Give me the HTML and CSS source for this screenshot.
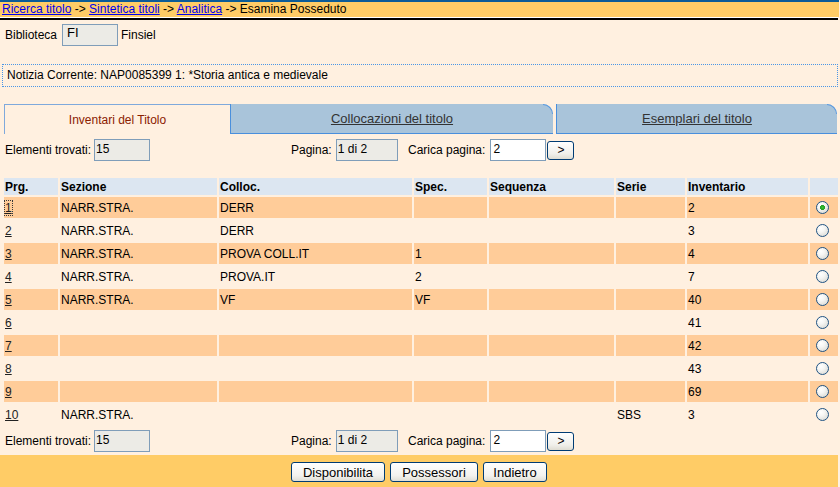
FILE: index.html
```html
<!DOCTYPE html>
<html lang="it">
<head>
<meta charset="utf-8">
<title>Esamina Posseduto</title>
<link rel="stylesheet" href="styles.css">
</head>
<body>
<div class="page">
  <div class="topstrip"></div>
  <div class="crumbs"><a href="#">Ricerca titolo</a> -&gt; <a href="#">Sintetica titoli</a> -&gt; <a href="#">Analitica</a> -&gt; Esamina Posseduto</div>
  <div class="rule"></div>

  <div class="bib">
    <span>Biblioteca</span>
    <input class="field ro bibfield" value="FI" readonly>
    <span class="bibname">Finsiel</span>
  </div>

  <div class="notizia">Notizia Corrente: NAP0085399 1: *Storia antica e medievale</div>

  <div class="tabs">
    <div class="tab tab-active">Inventari del Titolo</div>
    <div class="tab tab-off tab-two"><a href="#">Collocazioni del titolo</a></div>
    <div class="tab tab-off tab-three"><a href="#">Esemplari del titolo</a></div>
  </div>

  <div class="pager">
    <div class="pg-a"><span>Elementi trovati:</span><input class="field ro f-count" value="15" readonly></div>
    <div class="pg-b"><span>Pagina:</span><input class="field ro f-page" value="1 di 2" readonly></div>
    <div class="pg-c"><span>Carica pagina:</span><input class="field f-load" value="2"><button class="go">&gt;</button></div>
  </div>

  <table class="grid">
    <colgroup>
      <col class="c-prg"><col class="c-sez"><col class="c-col"><col class="c-spec"><col class="c-seq"><col class="c-ser"><col class="c-inv"><col class="c-rad">
    </colgroup>
    <thead>
      <tr><th>Prg.</th><th>Sezione</th><th>Colloc.</th><th>Spec.</th><th>Sequenza</th><th>Serie</th><th>Inventario</th><th></th></tr>
    </thead>
    <tbody>
      <tr class="odd"><td><a href="#" class="focus">1</a></td><td>NARR.STRA.</td><td>DERR</td><td></td><td></td><td></td><td>2</td><td><span class="radio checked"></span></td></tr>
      <tr class="even"><td><a href="#">2</a></td><td>NARR.STRA.</td><td>DERR</td><td></td><td></td><td></td><td>3</td><td><span class="radio"></span></td></tr>
      <tr class="odd"><td><a href="#">3</a></td><td>NARR.STRA.</td><td>PROVA COLL.IT</td><td>1</td><td></td><td></td><td>4</td><td><span class="radio"></span></td></tr>
      <tr class="even"><td><a href="#">4</a></td><td>NARR.STRA.</td><td>PROVA.IT</td><td>2</td><td></td><td></td><td>7</td><td><span class="radio"></span></td></tr>
      <tr class="odd"><td><a href="#">5</a></td><td>NARR.STRA.</td><td>VF</td><td>VF</td><td></td><td></td><td>40</td><td><span class="radio"></span></td></tr>
      <tr class="even"><td><a href="#">6</a></td><td></td><td></td><td></td><td></td><td></td><td>41</td><td><span class="radio"></span></td></tr>
      <tr class="odd"><td><a href="#">7</a></td><td></td><td></td><td></td><td></td><td></td><td>42</td><td><span class="radio"></span></td></tr>
      <tr class="even"><td><a href="#">8</a></td><td></td><td></td><td></td><td></td><td></td><td>43</td><td><span class="radio"></span></td></tr>
      <tr class="odd"><td><a href="#">9</a></td><td></td><td></td><td></td><td></td><td></td><td>69</td><td><span class="radio"></span></td></tr>
      <tr class="even"><td><a href="#">10</a></td><td>NARR.STRA.</td><td></td><td></td><td></td><td>SBS</td><td>3</td><td><span class="radio"></span></td></tr>
    </tbody>
  </table>

  <div class="pager pager-bottom">
    <div class="pg-a"><span>Elementi trovati:</span><input class="field ro f-count" value="15" readonly></div>
    <div class="pg-b"><span>Pagina:</span><input class="field ro f-page" value="1 di 2" readonly></div>
    <div class="pg-c"><span>Carica pagina:</span><input class="field f-load" value="2"><button class="go">&gt;</button></div>
  </div>

  <div class="footer">
    <button class="btn b-disp">Disponibilita</button>
    <button class="btn b-poss">Possessori</button>
    <button class="btn b-ind">Indietro</button>
  </div>
</div>
</body>
</html>
```

FILE: styles.css
```css
html, body {
  margin: 0;
  padding: 0;
  background: #fff0e0;
}
body {
  font-family: "Liberation Sans", Arial, sans-serif;
  font-size: 12px;
  color: #000;
}
.page {
  width: 840px;
  height: 487px;
  overflow: hidden;
}
.topstrip {
  height: 2px;
  width: 839px;
  background: #0b5b97;
}
.crumbs {
  height: 15px;
  line-height: 15px;
  width: 837px;
  padding-left: 2px;
  background: #ffcc66;
  white-space: nowrap;
}
.crumbs a {
  color: #0000ee;
  text-decoration: underline;
}
.rule {
  width: 838px;
  height: 2px;
  background: #000;
  border-top: 1px solid #fff;
}
.bib {
  display: flex;
  align-items: center;
  height: 22px;
  padding: 4px 0 0 5px;
  margin-bottom: 18px;
}
.field {
  box-sizing: border-box;
  height: 22px;
  border: 1px solid #7f9db9;
  background: #fff;
  font-family: "Liberation Sans", Arial, sans-serif;
  font-size: 12px;
  color: #000;
  padding: 0 0 3px 1px;
  margin: 0;
  outline: none;
}
.field.ro {
  background: #ecebe6;
}
.bibfield {
  width: 56px;
  margin-left: 5px;
  padding-left: 4px;
  font-size: 13px;
  padding-bottom: 5px;
}
.bibname {
  margin-left: 3px;
}
.notizia {
  margin: 0 2px;
  height: 21px;
  line-height: 21px;
  padding-left: 4px;
  border: 1px dotted #4b96e6;
}
.tabs {
  display: flex;
  height: 30px;
  margin: 17px 0 0 4px;
}
.tab {
  box-sizing: border-box;
  height: 30px;
  display: flex;
  align-items: center;
  justify-content: center;
  position: relative;
}
.tab-active {
  width: 226px;
  border-top: 1px solid #7fa9dc;
  border-left: 1px solid #7fa9dc;
  color: #8b2000;
  font-size: 12px;
}
.tab-off {
  background: #a9c4da;
  border-left: 1px solid #4a8fdc;
  border-bottom: 1px solid #4a8fdc;
  border-top-right-radius: 10px;
  font-size: 13px;
  font-weight: normal;
}
.tab-off::after {
  content: "";
  position: absolute;
  top: 0;
  right: 0;
  width: 10px;
  height: 10px;
  box-sizing: border-box;
  border-top: 1px solid #5a9ae0;
  border-right: 1px solid #5a9ae0;
  border-top-right-radius: 10px;
}
.tab-off a {
  color: #333;
  text-decoration: underline;
}
.tab-two {
  width: 323px;
}
.tab-three {
  width: 281px;
  margin-left: 3px;
}
.pager {
  display: flex;
  align-items: center;
  height: 22px;
  margin-top: 5px;
  padding-left: 5px;
}
.pager-bottom {
  margin-top: 3px;
}
.pg-a, .pg-b, .pg-c {
  display: flex;
  align-items: center;
}
.pg-a {
  width: 286px;
}
.pg-b {
  width: 117px;
}
.f-count {
  width: 56px;
  margin-left: 3px;
}
.f-page {
  width: 62px;
  margin-left: 4px;
}
.f-load {
  width: 56px;
  margin-left: 5px;
  padding-left: 2px;
}
.go {
  box-sizing: border-box;
  width: 27px;
  height: 19px;
  margin-left: 1px;
  padding: 0;
  border: 1px solid #003c74;
  border-radius: 3px;
  background: linear-gradient(#ffffff, #f0efea 70%, #dedcd2);
  font-family: "Liberation Sans", Arial, sans-serif;
  font-size: 12px;
  font-weight: normal;
  color: #000;
  line-height: 15px;
}
.grid {
  table-layout: fixed;
  width: 838px;
  margin: 15px 0 0 2px;
  border-collapse: separate;
  border-spacing: 2px;
}
.c-prg { width: 54px; }
.c-sez { width: 157px; }
.c-col { width: 193px; }
.c-spec { width: 73px; }
.c-seq { width: 125px; }
.c-ser { width: 69px; }
.c-inv { width: 121px; }
.c-rad { width: 28px; }
.grid th {
  height: 17px;
  padding: 0 1px;
  text-align: left;
  font-weight: bold;
  font-size: 12px;
  background: #dce6f1;
  white-space: nowrap;
}
.grid td {
  height: 21px;
  padding: 0 1px;
  white-space: nowrap;
  vertical-align: middle;
}
.grid tr.odd td {
  background: #ffcc99;
}
.grid td a {
  color: #222;
  text-decoration: underline;
}
.grid td a.focus {
  outline: 1px dotted #3a3a3a;
}
.grid td:last-child {
  padding-left: 6px;
}
.radio {
  display: block;
  box-sizing: border-box;
  width: 13px;
  height: 13px;
  border-radius: 50%;
  border: 1px solid #1f5384;
  background: radial-gradient(circle at 35% 30%, #ffffff 0%, #f6f6f4 35%, #d3d3cd 100%);
}
.radio.checked {
  background:
    radial-gradient(circle at 50% 50%, #39c43a 0, #1f9f20 2.2px, rgba(0,0,0,0) 2.8px),
    radial-gradient(circle at 35% 30%, #ffffff 0%, #f6f6f4 35%, #d3d3cd 100%);
}
.footer {
  display: flex;
  justify-content: center;
  gap: 5px;
  width: 838px;
  height: 32px;
  box-sizing: border-box;
  padding-top: 7px;
  margin-top: 3px;
  background: #ffcc66;
}
.btn {
  box-sizing: border-box;
  height: 20px;
  padding: 0;
  border: 1px solid #003c74;
  border-radius: 3px;
  background: linear-gradient(#ffffff, #f3f2ee 70%, #e0ded5);
  font-family: "Liberation Sans", Arial, sans-serif;
  font-size: 13px;
  color: #000;
  line-height: 17px;
}
.b-disp { width: 94px; }
.b-poss { width: 88px; }
.b-ind { width: 64px; }
```
